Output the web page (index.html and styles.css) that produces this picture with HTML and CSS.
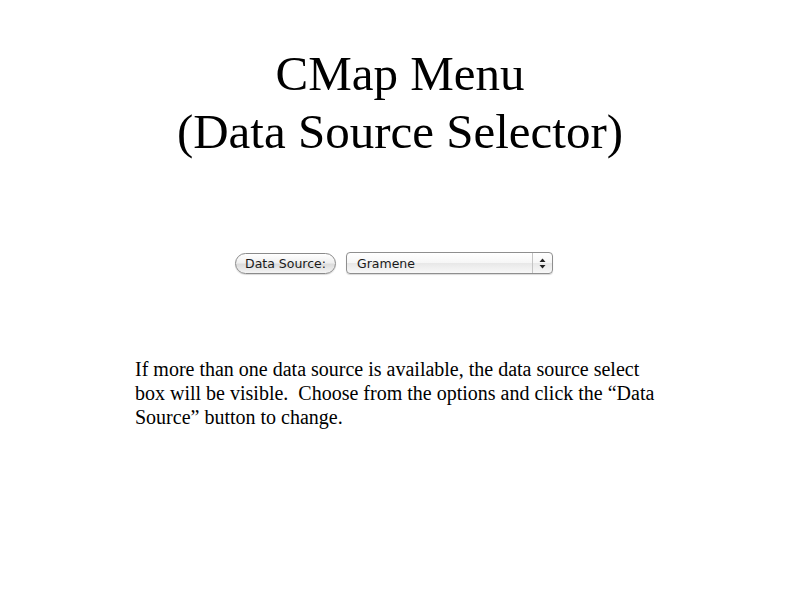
FILE: index.html
```html
<!DOCTYPE html>
<html lang="en">
<head>
    <meta charset="UTF-8">
    <meta name="viewport" content="width=device-width, initial-scale=1.0">
    <title>CMap Menu</title>
    <link rel="stylesheet" href="styles.css">
</head>
<body>
    <header>
        <h1>CMap Menu<br>(Data Source Selector)</h1>
    </header>

    <div id="source-form">
        <button class="btn source-btn">Data Source:</button>
        <div class="select">
            <span class="select-value">Gramene</span>
            <span class="select-arrows">
                <svg width="7" height="11" viewBox="0 0 7 11">
                    <path d="M3.5 0.5 L6.5 4 L0.5 4 Z" fill="#222"/>
                    <path d="M0.5 7 L6.5 7 L3.5 10.5 Z" fill="#222"/>
                </svg>
            </span>
        </div>
    </div>

    <main>
        <p>
            If more than one data source is available, the data source select<br>
            box will be visible.&nbsp; Choose from the options and click the &ldquo;Data<br>
            Source&rdquo; button to change.
        </p>
    </main>
</body>
</html>
```

FILE: styles.css
```css
html {
    font-family: "Liberation Serif", "Times New Roman", serif;
    background-color: #ffffff;
    color: #000000;
}
body {
    margin: 0;
    padding: 0;
}

h1 {
    margin: 0;
    padding-top: 45px;
    text-align: center;
    font-size: 49px;
    font-weight: normal;
    line-height: 58px;
}

#source-form {
    display: flex;
    justify-content: center;
    align-items: center;
    gap: 10px;
    margin-top: 91px;
    padding-right: 12px;
}

.btn {
    font-family: "DejaVu Sans", sans-serif;
    font-size: 12.5px;
    color: #1a1a1a;
    height: 21px;
    padding: 0 9px;
    border: 1px solid #8a8a8a;
    border-radius: 11px;
    background: linear-gradient(#ffffff, #f0f0f0 45%, #dcdcdc 55%, #f4f4f4);
    box-shadow: 0 1px 1px rgba(0, 0, 0, 0.15);
}

.select {
    display: flex;
    width: 205px;
    height: 20px;
    border: 1px solid #8f8f8f;
    border-radius: 4px;
    background: linear-gradient(#ffffff, #f6f6f6 50%, #e8e8e8 52%, #f8f8f8);
    box-shadow: 0 1px 1px rgba(0, 0, 0, 0.15);
    font-family: "DejaVu Sans", sans-serif;
    font-size: 12.5px;
    color: #1a1a1a;
}
.select-value {
    flex: 1;
    padding-left: 10px;
    line-height: 21px;
}
.select-arrows {
    width: 19px;
    border-left: 1px solid #c4c4c4;
    display: flex;
    align-items: center;
    justify-content: center;
}

main {
    padding: 0 135px;
    margin-top: 83px;
}
main p {
    margin: 0;
    font-size: 20px;
    line-height: 24px;
    white-space: nowrap;
}
```
